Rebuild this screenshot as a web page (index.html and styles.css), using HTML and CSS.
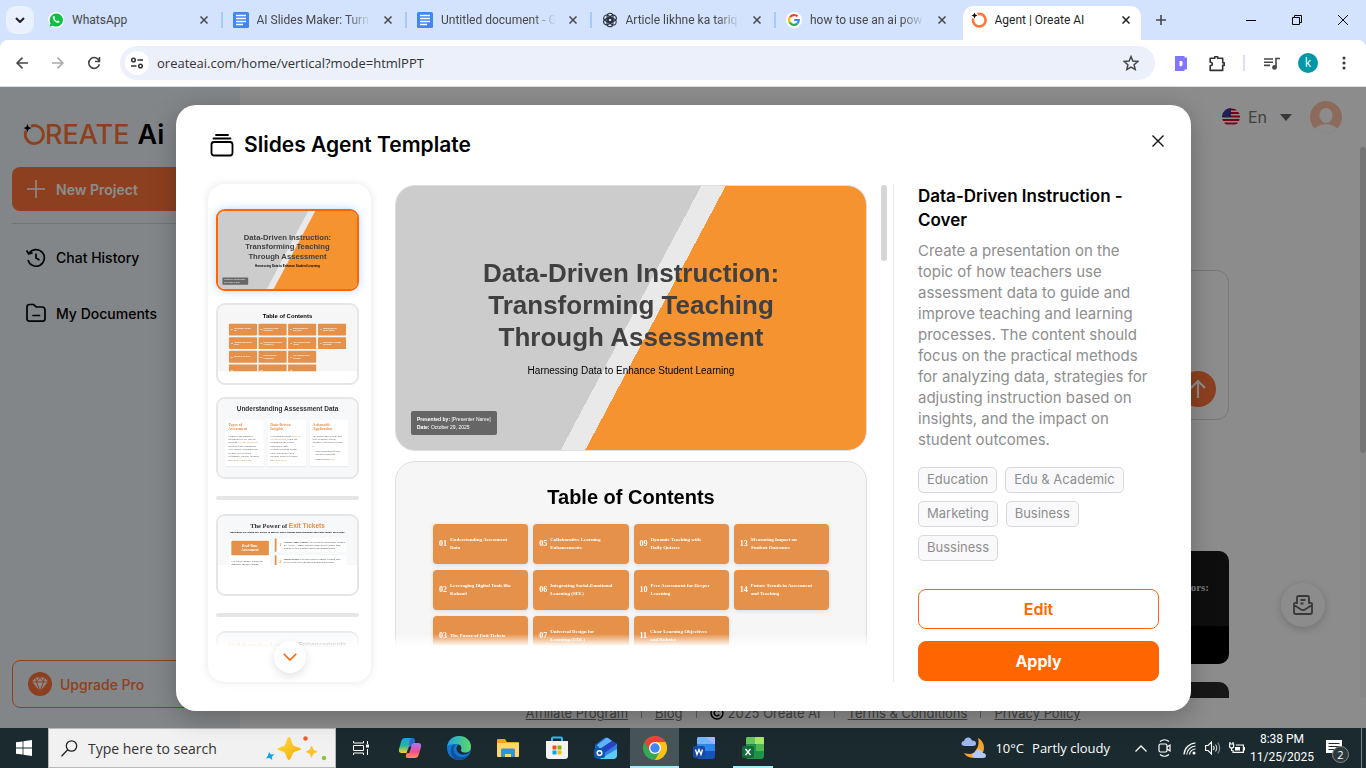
FILE: index.html
```html
<!DOCTYPE html>
<html lang="en">
<head>
<meta charset="utf-8">
<title>Agent | Oreate AI</title>
<link rel="stylesheet" href="styles.css">
</head>
<body>
<header class="browser">
  <div class="tabstrip">
    <button class="tab-search" aria-label="Search tabs"><svg width="10" height="6" viewBox="0 0 10 6"><path d="M1 1l4 4 4-4" fill="none" stroke="#1f1f1f" stroke-width="2"/></svg></button>
    <div class="tabs">
      <div class="tab"><svg class="fav" viewBox="0 0 16 16"><circle cx="8" cy="8" r="8" fill="#fff"/><path d="M1.6 14.6l.9-3.5A6.6 6.6 0 1 1 5 13.700z" fill="#0bc143"/><path d="M5.300 4.300c-1.500 1 .2 3.900 1.500 5 1.400 1.300 3.700 2.500 4.600 1 .6-1.100-.2-1.100-1.300-1.800-.8-.4-.8.9-1.500.5C7.600 8.500 7 7.800 6.500 7c-.3-.6.9-.8.4-1.600-.4-.9-.8-1.700-1.600-1.100z" fill="#fff"/></svg><span class="tab-title">WhatsApp</span><button class="tab-close" aria-label="Close tab"><svg viewBox="0 0 8 8"><path d="M.5.5l7 7M7.500.5l-7 7"/></svg></button></div>
      <div class="tab"><svg class="fav" viewBox="0 0 16 16"><rect width="16" height="16" rx="1.500" fill="#4285f4"/><path d="M3 3.500h10M3 6.500h10M3 9.500h10M3 12.500h7" stroke="#fff" stroke-width="1.500"/></svg><span class="tab-title tab-fade">AI Slides Maker: Turn</span><button class="tab-close" aria-label="Close tab"><svg viewBox="0 0 8 8"><path d="M.5.5l7 7M7.500.5l-7 7"/></svg></button></div>
      <div class="tab"><svg class="fav" viewBox="0 0 16 16"><rect width="16" height="16" rx="1.500" fill="#4285f4"/><path d="M3 3.500h10M3 6.500h10M3 9.500h10M3 12.500h7" stroke="#fff" stroke-width="1.500"/></svg><span class="tab-title tab-fade">Untitled document - G</span><button class="tab-close" aria-label="Close tab"><svg viewBox="0 0 8 8"><path d="M.5.5l7 7M7.500.5l-7 7"/></svg></button></div>
      <div class="tab"><svg class="fav" viewBox="0 0 16 16" fill="none" stroke="#27303c" stroke-width="1.100"><g id="knot"><path d="M8 1.200a3 3 0 0 1 3 2.800v4.500L8 10.200 5.200 8.600"/><path d="M8 1.200a3 3 0 0 0-2.900 2.300L5.100 8"/></g><use href="#knot" transform="rotate(60 8 8)"/><use href="#knot" transform="rotate(120 8 8)"/><use href="#knot" transform="rotate(180 8 8)"/><use href="#knot" transform="rotate(240 8 8)"/><use href="#knot" transform="rotate(300 8 8)"/></svg><span class="tab-title tab-fade">Article likhne ka tariq</span><button class="tab-close" aria-label="Close tab"><svg viewBox="0 0 8 8"><path d="M.5.5l7 7M7.500.5l-7 7"/></svg></button></div>
      <div class="tab tab-last"><svg class="fav" viewBox="0 0 16 16"><circle cx="8" cy="8" r="8" fill="#fff"/><g fill="none" stroke-width="2.200"><path d="M4 5.200a4.900 4.900 0 0 1 7.500-.8" stroke="#ea4335"/><path d="M3.700 10.400a4.900 4.900 0 0 1 .3-5.200" stroke="#fbbc04"/><path d="M11.300 11.600a4.900 4.900 0 0 1-7.600-1.200" stroke="#34a853"/><path d="M8.200 8h4.600c0 1.600-.6 2.800-1.500 3.600" stroke="#4285f4"/></g></svg><span class="tab-title tab-fade">how to use an ai pow</span><button class="tab-close" aria-label="Close tab"><svg viewBox="0 0 8 8"><path d="M.5.5l7 7M7.500.5l-7 7"/></svg></button></div>
      <div class="tab tab-active"><svg class="fav" viewBox="0 0 16 16"><circle cx="8.300" cy="8.200" r="6.300" fill="none" stroke="#ff7539" stroke-width="2.600"/><circle cx="3.500" cy="3.500" r="3.300" fill="#fff"/><path d="M3.500.5l.9 2.100 2.100.9-2.100.9-.9 2.100-.9-2.100-2.100-.9 2.100-.9z" fill="#111"/></svg><span class="tab-title">Agent | Oreate AI</span><button class="tab-close" aria-label="Close tab"><svg viewBox="0 0 8 8"><path d="M.5.5l7 7M7.500.5l-7 7"/></svg></button></div>
    </div>
    <button class="new-tab" aria-label="New tab"><svg width="10" height="10" viewBox="0 0 10 10"><path d="M5 0v10M0 5h10" stroke="#474747" stroke-width="1.600"/></svg></button>
    <div class="window-controls">
      <button aria-label="Minimize"><svg width="10" height="10" viewBox="0 0 10 10"><path d="M0 5.500h10" stroke="#000"/></svg></button>
      <button aria-label="Restore"><svg width="10" height="10" viewBox="0 0 10 10" fill="none" stroke="#000"><path d="M.5 2.500h7v7h-7zM2.500 2.500v-2h7v7h-2"/></svg></button>
      <button aria-label="Close window"><svg width="10" height="10" viewBox="0 0 10 10"><path d="M0 0l10 10M10 0L0 10" stroke="#000"/></svg></button>
    </div>
  </div>
  <div class="toolbar">
    <button class="tool" aria-label="Back"><svg width="12" height="12" viewBox="0 0 12 12" fill="none" stroke="#474747" stroke-width="1.600"><path d="M12 6H1M6.500.600L1.100 6l5.400 5.400"/></svg></button>
    <button class="tool" aria-label="Forward"><svg width="12" height="12" viewBox="0 0 12 12" fill="none" stroke="#ababab" stroke-width="1.600"><path d="M0 6h11M5.500.600L10.900 6l-5.400 5.400"/></svg></button>
    <button class="tool" aria-label="Reload"><svg width="14" height="14" viewBox="0 0 14 14" fill="none" stroke="#474747" stroke-width="1.600"><path d="M12.200 5A5.400 5.400 0 1 0 12.400 8.300M12.500 1v4.500H8"/></svg></button>
    <div class="omnibox">
      <button class="site-info" aria-label="View site information"><svg width="14" height="12" viewBox="0 0 14 12" fill="none" stroke="#333" stroke-width="1.500"><circle cx="3.500" cy="3" r="1.800"/><path d="M7.500 3H13M1 9h5.500"/><circle cx="10.500" cy="9" r="1.800"/></svg></button>
      <input class="url" type="text" aria-label="Address and search bar" value="oreateai.com/home/vertical?mode=htmlPPT">
      <button class="star" aria-label="Bookmark this tab"><svg width="16" height="16" viewBox="0 0 16 16"><path d="M8 1.600l1.900 4.500 4.900.4-3.700 3.200 1.100 4.800L8 12l-4.200 2.500 1.100-4.800L1.200 6.500l4.900-.4z" fill="none" stroke="#474747" stroke-width="1.500"/></svg></button>
    </div>
    <div class="tool-group">
      <button class="tool" aria-label="D extension"><svg width="12" height="15" viewBox="0 0 12 15"><path d="M0 0h9.500v1.500H12v12H9.500V15H0z" fill="#8076ff"/><path d="M4.500 5q3-.5 3 1v3q0 1.500-3 1z" fill="#fff"/></svg></button>
      <button class="tool" aria-label="Extensions"><svg width="16" height="17" viewBox="0 0 16 17"><path d="M1.200 3.200h4.600V1.700h2.900v1.500h5v4.600h1.500v2.600h-1.500v5H1.200v-4.600q2.200-.2 2.200-1.700T1.200 7.300z" fill="none" stroke="#333" stroke-width="1.600" stroke-linejoin="round"/></svg></button>
      <span class="tool-sep"></span>
      <button class="tool" aria-label="Media controls"><svg width="16" height="13" viewBox="0 0 16 13"><path d="M0 2h9M0 5.200h9M0 8.400h6M12 10V1.500h4" fill="none" stroke="#474747" stroke-width="1.600"/><circle cx="10.500" cy="10.400" r="2.400" fill="#474747"/></svg></button>
      <button class="tool" aria-label="Profile"><span class="profile">k</span></button>
      <button class="tool" aria-label="Menu"><svg width="4" height="14" viewBox="0 0 4 14" fill="#333"><circle cx="2" cy="2" r="1.500"/><circle cx="2" cy="7" r="1.500"/><circle cx="2" cy="12" r="1.500"/></svg></button>
    </div>
  </div>
</header>

<div class="page">
  <nav class="sidebar">
    <a class="logo" href="#" aria-label="Oreate AI home"><svg width="22" height="24" viewBox="0 0 22 24"><path d="M8 4.200A9 9 0 1 1 3.300 8.500" fill="none" stroke="#ff7539" stroke-width="2.800"/><path d="M4.500 2l1.200 2.900L8.600 6 5.700 7.200 4.500 10 3.300 7.200.400 6l2.900-1.100z"/></svg><span class="logo-main">REATE</span><span class="logo-ai">Ai</span></a>
    <button class="new-project"><svg width="18" height="18" viewBox="0 0 18 18"><path d="M9 0v18M0 9h18" stroke="#fff" stroke-width="1.600"/></svg>New Project</button>
    <a class="nav-item" href="#"><svg width="20" height="20" viewBox="0 0 20 20" fill="none" stroke="#000" stroke-width="1.700"><path d="M3 5.500A8.300 8.300 0 1 1 2 12M.6 2.500L2.700 6l3.900-1.200M10 5.500V10l3.500 2"/></svg>Chat History</a>
    <a class="nav-item" href="#"><svg width="20" height="20" viewBox="0 0 20 20" fill="none" stroke="#000" stroke-width="1.700"><path d="M1 16V4q0-2.500 2.500-2.500h4L10.300 4H16q3 0 3 3v9q0 2.200-2.500 2.200h-13Q1 18.200 1 16zM7 12.500h6.500" stroke-linecap="round"/></svg>My Documents</a>
    <button class="upgrade"><svg width="24" height="24" viewBox="0 0 24 24"><circle cx="12" cy="12" r="12" fill="#ff7539"/><path d="M7.500 5.500h9l3.500 4.300-8 9.200-8-9.200z" fill="#fff"/><path d="M4 10h16M8.500 10l3.500 9 3.500-9L12 5.500 8.500 10 7.500 5.500M15.500 10l1-4.500" fill="none" stroke="#ff7539"/></svg>Upgrade Pro</button>
  </nav>
  <main class="main">
    <div class="topbar">
      <svg width="18" height="18" viewBox="0 0 18 18"><defs><clipPath id="flag"><circle cx="9" cy="9" r="9"/></clipPath></defs><g clip-path="url(#flag)"><path fill="#fff" d="M0 0h18v18H0z"/><path d="M0 1.500h18M0 5h18M0 8.500h18M0 12h18M0 15.500h18" stroke="#d80027" stroke-width="1.800"/><path fill="#3a3a9c" d="M0 0h9v9H0z"/></g></svg>
      <select class="lang" aria-label="Language"><option>En</option></select>
      <svg class="caret" width="12" height="7" viewBox="0 0 12 7"><path d="M0 0h12L6 7z" fill="#666"/></svg>
      <svg width="32" height="32" viewBox="0 0 32 32"><defs><clipPath id="ava"><circle cx="16" cy="16" r="16"/></clipPath></defs><g clip-path="url(#ava)"><path fill="#ffc4a8" d="M0 0h32v32H0z"/><ellipse cx="16" cy="14.500" rx="6.500" ry="7.500" fill="#fff"/><ellipse cx="16" cy="32" rx="13" ry="9" fill="#fff"/></g></svg>
    </div>
    <div class="scroll-area">
      <div class="content">
        <div class="prompt"><textarea aria-label="Prompt"></textarea><button class="send" aria-label="Send"><svg width="16" height="20" viewBox="0 0 16 20"><path d="M8 19V2M1 9l7-7 7 7" fill="none" stroke="#fff" stroke-width="2.200"/></svg></button></div>
        <div class="cards">
          <div class="card"></div><div class="card"></div><div class="card"></div><div class="card card-text"><span>ors:</span></div>
          <div class="card"></div><div class="card"></div><div class="card"></div><div class="card"></div>
        </div>
      </div>
      <div class="scroll-track"><div class="scroll-thumb"></div></div>
    </div>
    <footer class="footer">
      <a href="#">Affiliate Program</a><i></i><a href="#">Blog</a><i></i><span class="copy"><svg width="14" height="14" viewBox="0 0 14 14" fill="none" stroke="#000" stroke-width="1.500"><circle cx="7" cy="7" r="6"/><path d="M9.300 5.500a2.800 2.800 0 1 0 0 3"/></svg>2025 Oreate AI</span><i></i><a href="#">Terms &amp; Conditions</a><i></i><a href="#">Privacy Policy</a>
    </footer>
    <button class="feedback" aria-label="Messages"><svg width="22" height="22" viewBox="0 0 22 22" fill="none" stroke="#666" stroke-width="1.800" stroke-linejoin="round"><path d="M5 10V3.500Q5 2 6.500 2h9Q17 2 17 3.500V10M5 8L2 9.500V18q0 2 2 2h14q2 0 2-2V9.500L17 8M2 11l7 4.500q2 1 4 0L20 11M8.500 6h5M8.500 9.500h3"/></svg></button>
  </main>

  <div class="overlay">
    <section class="modal" role="dialog" aria-labelledby="modal-title">
      <div class="modal-head">
        <svg width="24" height="24" viewBox="0 0 24 24" fill="none" stroke="#000" stroke-width="1.800" stroke-linecap="round"><rect x="1.500" y="9" width="21" height="13.500" rx="2.500"/><path d="M3.500 5.500h17M6 2h12"/></svg>
        <h1 id="modal-title">Slides Agent Template</h1>
        <button class="modal-close" aria-label="Close"><svg width="12" height="12" viewBox="0 0 12 12"><path d="M.5.5l11 11M11.500.5l-11 11" stroke="#111" stroke-width="1.400"/></svg></button>
      </div>
      <div class="modal-body">
        <div class="thumbs">
          <div class="thumb-list">
            <button class="thumb thumb-on" aria-label="Slide 1">
              <svg viewBox="0 0 470 264"><path fill="#ccc" d="M0 0h470v264H0z"/><path fill="#e9e9e9" d="M305 0h40L205 264h-40z"/><path fill="#f69331" d="M329 0h141v264H188z"/>
              <g class="sans bold" text-anchor="middle" font-size="26" fill="#404040"><text x="235" y="97">Data-Driven Instruction:</text><text x="235" y="129">Transforming Teaching</text><text x="235" y="161">Through Assessment</text></g>
              <text class="sans bold" x="235" y="188" text-anchor="middle" font-size="10">Harnessing Data to Enhance Student Learning</text>
              <rect x="15" y="225" width="87" height="24" rx="2" fill="#666"/><g class="sans" font-size="5" fill="#fff"><text x="21" y="235">Presented by: [Presenter Name]</text><text x="21" y="243">Date: October 29, 2025</text></g></svg>
            </button>
            <button class="thumb" aria-label="Slide 2">
              <svg viewBox="0 0 470 264"><path fill="#f6f6f6" d="M0 0h470v224H0z"/><text class="sans bold" x="235" y="43" text-anchor="middle" font-size="20">Table of Contents</text>
              <g fill="#e5914a"><rect x="37" y="63" width="95" height="40" rx="3"/><rect x="137" y="63" width="95" height="40" rx="3"/><rect x="237" y="63" width="95" height="40" rx="3"/><rect x="338" y="63" width="95" height="40" rx="3"/><rect x="37" y="109" width="95" height="40" rx="3"/><rect x="137" y="109" width="95" height="40" rx="3"/><rect x="237" y="109" width="95" height="40" rx="3"/><rect x="338" y="109" width="95" height="40" rx="3"/><rect x="37" y="155" width="95" height="40" rx="3"/><rect x="137" y="155" width="95" height="40" rx="3"/><rect x="237" y="155" width="95" height="40" rx="3"/><path d="M37 201h95v23H37zM137 201h95v23h-95zM237 201h95v23h-95z"/></g>
              <g class="serif bold" font-size="8" fill="#fff"><text x="43" y="86">01</text><text x="143" y="86">05</text><text x="243" y="86">09</text><text x="344" y="86">13</text><text x="43" y="132">02</text><text x="143" y="132">06</text><text x="243" y="132">10</text><text x="344" y="132">14</text><text x="43" y="178">03</text><text x="143" y="178">07</text><text x="243" y="178">11</text><text x="43" y="222">04</text><text x="143" y="222">08</text><text x="243" y="222">12</text></g>
              <g class="serif bold" font-size="5" fill="#fff"><text x="54" y="81">Understanding Assessment</text><text x="54" y="89">Data</text><text x="154" y="81">Collaborative Learning</text><text x="154" y="89">Enhancements</text><text x="254" y="81">Dynamic Teaching with</text><text x="254" y="89">Daily Quizzes</text><text x="355" y="81">Measuring Impact on</text><text x="355" y="89">Student Outcomes</text><text x="54" y="127">Leveraging Digital Tools like</text><text x="54" y="135">Kahoot!</text><text x="154" y="127">Integrating Social-Emotional</text><text x="154" y="135">Learning (SEL)</text><text x="254" y="127">Peer Assessment for Deeper</text><text x="254" y="135">Learning</text><text x="355" y="127">Future Trends in Assessment</text><text x="355" y="135">and Teaching</text><text x="54" y="177">The Power of Exit Tickets</text><text x="154" y="173">Universal Design for</text><text x="154" y="181">Learning (UDL)</text><text x="254" y="173">Clear Learning Objectives</text><text x="254" y="181">and Rubrics</text></g></svg>
            </button>
            <button class="thumb" aria-label="Slide 3">
              <svg viewBox="0 0 470 264"><path fill="#f7f8fa" d="M0 0h470v264H0z"/><text class="sans bold" x="235" y="40" text-anchor="middle" font-size="22" fill="#333">Understanding Assessment Data</text>
              <g fill="#e9eaec"><rect x="24" y="73" width="131" height="158" rx="4"/><rect x="167" y="73" width="131" height="158" rx="4"/><rect x="310" y="73" width="131" height="158" rx="4"/></g><g fill="#fff"><rect x="24" y="70" width="131" height="157" rx="4"/><rect x="167" y="70" width="131" height="157" rx="4"/><rect x="310" y="70" width="131" height="157" rx="4"/></g>
              <g class="serif bold" font-size="13" fill="#e5914a"><text x="35" y="91">Types of</text><text x="35" y="106">Assessment</text><text x="177" y="91">Data-Driven</text><text x="177" y="106">Insights</text><text x="320" y="91">Actionable</text><text x="320" y="106">Application</text></g>
              <g class="serif" font-size="8" fill="#555"><text x="35" y="128">Formative and summative</text><text x="35" y="139">assessments are key tools for</text><text x="35" y="150">gathering <tspan fill="#e5914a">real-time student data</tspan></text><text x="35" y="162">and identifying learning gaps.</text><text x="35" y="173">They provide a continuous and</text><text x="35" y="185">periodic view of student</text><text x="35" y="196">performance, not only for marks</text><text x="35" y="208">but <tspan fill="#e5914a">informed instruction.</tspan></text>
              <text x="177" y="128">Leveraging data turns <tspan fill="#e5914a">scores to</tspan></text><text x="177" y="139"><tspan fill="#e5914a">teaching insights</tspan>, trends and</text><text x="177" y="150">learning patterns, such as</text><text x="177" y="162">class gaps become.</text><text x="177" y="173">Teachers can design lessons</text><text x="177" y="185">where students need help</text><text x="177" y="196">and make adaptive decisions</text><text x="177" y="208">for <tspan fill="#e5914a">student skills.</tspan></text>
              <text x="320" y="128">The primary goal is to use data</text><text x="320" y="139">daily to improve student</text><text x="320" y="150">outcomes. This involves setting</text><text x="320" y="162">it:</text><text x="328" y="178" font-size="7">Group learning gaps efficiently.</text><text x="328" y="188" font-size="7">Plan targeted instruction.</text><text x="328" y="206" font-size="7">Support students <tspan fill="#e5914a">quickly.</tspan></text></g></svg>
            </button>
            <hr>
            <button class="thumb" aria-label="Slide 4">
              <svg viewBox="0 0 470 264"><path fill="#f7f8fa" d="M0 0h470v166H0z"/><text x="235" y="40" text-anchor="middle" font-size="22" fill="#333" class="serif bold">The Power of <tspan class="sans" fill="#e5914a">Exit Tickets</tspan></text><text class="serif bold" x="235" y="57" text-anchor="middle" font-size="9">Implement 60-second exit tickets to quickly assess student understanding and tailor follow-up lessons.</text>
              <path fill="#fff" d="M37 80h140v86H37zM195 76h240v45H195zM195 133h240v33H195z"/><rect x="45" y="84" width="127" height="49" rx="3" fill="#e5914a"/><path fill="#e5914a" d="M192 76h6v45h-6zM192 133h6v33h-6z"/>
              <g class="serif bold" font-size="12" fill="#fff" text-anchor="middle"><text x="108" y="104">Real-Time</text><text x="108" y="119">Assessment</text></g><g class="serif bold" font-size="14" fill="#e5914a"><text x="207" y="103">1</text><text x="207" y="159">2</text></g>
              <g class="serif" font-size="8" fill="#444"><text x="45" y="155">Exit tickets empower teachers for</text><text x="45" y="165">immediate and daily insights</text><text x="222" y="91"><tspan class="bold">Capture Finger Console:</tspan> Use checks for student goals in simple</text><text x="222" y="102">or 1–5 style. A simple sentence prompt gives feedback from</text><text x="222" y="113">students. Repeat to gauge progress and thoughtfulness.</text><text x="222" y="148"><tspan class="bold">Submit Results:</tspan> Use rubric tickets to choose learning, such</text><text x="222" y="159">as FOCUS or reflection and the measures as available</text></g></svg>
            </button>
            <hr>
            <button class="thumb" aria-label="Slide 5">
              <svg viewBox="0 0 470 264"><path fill="#f7f8fa" d="M0 0h470v264H0z"/><text x="235" y="46" text-anchor="middle" font-size="23" fill="#333" class="serif bold"><tspan fill="#e5914a">Collaborative Learning</tspan> <tspan class="sans">Enhancements</tspan></text></svg>
            </button>
          </div>
          <button class="more" aria-label="Scroll down"><svg width="14" height="8" viewBox="0 0 14 8"><path d="M.7.7L7 7 13.300.7" fill="none" stroke="#f60" stroke-width="1.600"/></svg></button>
        </div>

        <div class="viewer">
          <div class="slides">
            <article class="slide cover">
              <h2>Data-Driven Instruction:<br>Transforming Teaching<br>Through Assessment</h2>
              <p>Harnessing Data to Enhance Student Learning</p>
              <div class="presenter"><b>Presented by:</b> [Presenter Name]<br><b>Date:</b> October 29, 2025</div>
            </article>
            <article class="slide toc">
              <h2>Table of Contents</h2>
              <ol>
                <li><b>01</b><span>Understanding Assessment<br>Data</span></li><li><b>02</b><span>Leveraging Digital Tools like<br>Kahoot!</span></li><li><b>03</b><span>The Power of Exit Tickets</span></li>
                <li><b>05</b><span>Collaborative Learning<br>Enhancements</span></li><li><b>06</b><span>Integrating Social-Emotional<br>Learning (SEL)</span></li><li><b>07</b><span>Universal Design for<br>Learning (UDL)</span></li>
                <li><b>09</b><span>Dynamic Teaching with<br>Daily Quizzes</span></li><li><b>10</b><span>Peer Assessment for Deeper<br>Learning</span></li><li><b>11</b><span>Clear Learning Objectives<br>and Rubrics</span></li>
                <li><b>13</b><span>Measuring Impact on<br>Student Outcomes</span></li><li><b>14</b><span>Future Trends in Assessment<br>and Teaching</span></li>
              </ol>
            </article>
          </div>
          <div class="viewer-bar"></div>
        </div>

        <aside class="details">
          <h2>Data-Driven Instruction -<br>Cover</h2>
          <p>Create a presentation on the<br>topic of how teachers use<br>assessment data to guide and<br>improve teaching and learning<br>processes. The content should<br>focus on the practical methods<br>for analyzing data, strategies for<br>adjusting instruction based on<br>insights, and the impact on<br>student outcomes.</p>
          <ul class="tags"><li>Education</li><li>Edu &amp; Academic</li><li>Marketing</li><li>Business</li><li>Bussiness</li></ul>
          <div class="actions"><button class="edit">Edit</button><button class="apply">Apply</button></div>
        </aside>
      </div>
    </section>
  </div>
</div>

<div class="taskbar">
  <button class="start" aria-label="Start"><svg width="16" height="16" viewBox="0 0 16 16" fill="#fff"><path d="M0 2.300L6.600 1.400v6.200H0zM7.400 1.200L16 0v7.600H7.400zM0 8.400h6.600v6.200L0 13.700zM7.400 8.400H16V16l-8.600-1.200z"/></svg></button>
  <div class="search">
    <svg width="17" height="17" viewBox="0 0 17 17" fill="none" stroke="#222" stroke-width="1.300"><circle cx="10.500" cy="6" r="5.200"/><path d="M6.700 9.800L.5 16.300"/></svg>
    <input type="text" aria-label="Search" placeholder="Type here to search">
    <svg width="62" height="26" viewBox="0 0 62 26"><defs><linearGradient id="gold" x2="1" y2="1"><stop offset="0" stop-color="#ffdf45"/><stop offset="1" stop-color="#f5a800"/></linearGradient></defs><path d="M24 2c2 0 3 7 4.500 8.500S36 12.500 36 14s-6 2-7.500 3.500S26 25 24 25s-3-6-4.500-7.500S12.500 15.500 12.500 14s5.500-2 7-3.500S22 2 24 2z" fill="url(#gold)"/><path d="M46.500 11c1 0 1.500 3 2 3.700s3.700 1.100 3.700 2-3 1.300-3.700 2-1.200 3.700-2 3.700-1.300-3-2-3.700-3.600-1.100-3.600-2 2.900-1.300 3.600-2 1-3.700 2-3.700z" fill="#fbc02d"/><path d="M4 17l2 2.500 3.400-.3L7 21.800 7.200 25l-2.600-2-3.600.5 2-3z" fill="#13a4ee"/><circle cx="40.500" cy="3.500" r="2.200" fill="#f25c2a"/><circle cx="59" cy="23" r="2.200" fill="#8ac53c"/></svg>
  </div>
  <div class="apps">
    <button aria-label="Task view"><svg width="16" height="16" viewBox="0 0 16 16" fill="none" stroke="#fff"><path d="M.5 1v2h10V1M.5 5.500h10v5H.5zM.5 15v-2h10v2M14.500 1v3M14.500 9v6"/><path d="M13 4.500h3v3h-3z" fill="#fff" stroke="none"/></svg></button>
    <button aria-label="Copilot"><svg width="24" height="24" viewBox="0 0 24 24"><defs><linearGradient id="cp1" x2="0" y2="1"><stop offset="0" stop-color="#14a3ee"/><stop offset=".5" stop-color="#23b5a0"/><stop offset="1" stop-color="#ffd130"/></linearGradient><linearGradient id="cp2" x2="0" y2="1"><stop offset="0" stop-color="#a978f0"/><stop offset=".55" stop-color="#ee4e96"/><stop offset="1" stop-color="#ff944a"/></linearGradient></defs><path d="M7 2h7q3 0 2.500 3L13 14q-1 3-4 3H4q-4 0-3-4l2-7q1-4 4-4z" fill="url(#cp1)"/><path d="M17 22h-7q-3 0-2-3l3-9q1-3 4-3h5q4 0 3 4l-2 7q-1 4-4 4z" fill="url(#cp2)"/><path d="M13 2q4 0 4 5-3 0-4 3l-1 3q-2-6 1-11z" fill="#2868d8"/><path d="M11 10.500h2.500l-2.300 6.500H8.500z" fill="#1a2a2e"/></svg></button>
    <button aria-label="Edge"><svg width="24" height="24" viewBox="0 0 24 24"><defs><linearGradient id="ed" x2="1"><stop offset="0" stop-color="#1fa3e8"/><stop offset="1" stop-color="#5fda62"/></linearGradient></defs><circle cx="12" cy="12" r="12" fill="#1177cc"/><path d="M.3 10C1.500 4 6 0 12 0c7 0 12 5 12 10.500 0 4-3 6-6 6s-4.500-1-4-2.500c1-2 0-5.500-4.500-6C5 7.500 1.500 9 .3 10z" fill="url(#ed)"/><path d="M9 8c-4 3-3 11 4 13 4 1 7-1 9-3-3 5-8 7-13 5.500C2 20 2 9.500 9 8z" fill="#104e9e"/><path d="M14 14c1-3-.5-5-2.500-5.500C8 11 9 18 15.500 18.500c3.500.2 6-1 7.500-3-5 2.500-9.500 1-9-1.500z" fill="#1a2a2e"/></svg></button>
    <button aria-label="File Explorer"><svg width="22" height="20" viewBox="0 0 22 20"><path d="M0 2q0-1 1-1h7l2 3h11q1 0 1 1v13H0z" fill="#e8a81e"/><path d="M0 5h22v13q0 1-1 1H1q-1 0-1-1z" fill="#ffd766"/><path d="M4 19v-7q0-1.500 1.500-1.500h11Q18 10.500 18 12v7h-4v-3H8v3z" fill="#3791d8"/></svg></button>
    <button aria-label="Store"><svg width="24" height="24" viewBox="0 0 24 24"><path d="M7 6V2.500Q7 1.500 8 1.500h8q1 0 1 1V6" fill="none" stroke="#33b6f0" stroke-width="2"/><path d="M1 5h22v15q0 3-3 3H4q-3 0-3-3z" fill="#f3f3f3"/><path d="M7.500 9.500h4v4h-4z" fill="#f25022"/><path d="M12.500 9.500h4v4h-4z" fill="#7fba00"/><path d="M7.500 14.500h4v4h-4z" fill="#00a4ef"/><path d="M12.500 14.500h4v4h-4z" fill="#ffb900"/></svg></button>
    <button aria-label="Outlook"><svg width="24" height="24" viewBox="0 0 24 24"><path d="M1 9l9-7q2-1 4 0l9 6v11q0 4-4 4H5q-4 0-4-4z" fill="#1a5fd0"/><path d="M3 9l9-7q1-.5 2 0l4 3-12 8z" fill="#5db5f7"/><path d="M18 5l5 3-11 9-6-4z" fill="#2a3fc4"/><path d="M23 8v11q0 4-4 4H6z" fill="#58cdf9"/><path d="M23 8v5L11 20l-2-2z" fill="#2f7fe8"/><rect y="12" width="11" height="10" rx="2" fill="#0a58ad"/><circle cx="5.500" cy="17" r="2.300" fill="none" stroke="#fff" stroke-width="1.500"/></svg></button>
    <button class="app-on app-current" aria-label="Chrome"><svg width="24" height="24" viewBox="0 0 24 24"><circle cx="12" cy="12" r="12" fill="#34a853"/><path d="M1.600 6A12 12 0 0 1 22.400 6H12L7 15z" fill="#ea4335"/><path d="M22.400 6A12 12 0 0 1 12 24l5.200-9L12 6z" fill="#fbc116"/><circle cx="12" cy="12" r="6" fill="#fff"/><circle cx="12" cy="12" r="4.700" fill="#4285f4"/></svg></button>
    <button aria-label="Word"><svg width="22" height="24" viewBox="0 0 22 24"><path d="M5 1h16q1 0 1 1v6H4V3q0-2 1-2z" fill="#74b4fb"/><path d="M13 1h8q1 0 1 2v6z" fill="#a7b5ff"/><path d="M4 8h18v7H4z" fill="#2e85e8"/><path d="M4 15h18v5q0 3-3 3H6q-2 0-2-2z" fill="#1455bd"/><rect y="10" width="12" height="12" rx="2" fill="#164ca6"/><path d="M2.500 13.500l1.500 5 2-5 2 5 1.500-5" fill="none" stroke="#fff" stroke-width="1.300"/></svg></button>
    <button class="app-on" aria-label="Excel"><svg width="22" height="24" viewBox="0 0 22 24"><path d="M5 1h16q1 0 1 1v6H4V3q0-2 1-2z" fill="#67c45a"/><path d="M13 1h8q1 0 1 2v6h-9z" fill="#a6e46b"/><path d="M4 8h18v12q0 3-3 3H6q-2 0-2-2z" fill="#1f9448"/><path d="M14 8h8v7h-8z" fill="#4cb84f"/><rect y="10" width="12" height="12" rx="2" fill="#136b3b"/><path d="M3.500 13l5 6M8.500 13l-5 6" stroke="#fff" stroke-width="1.500"/></svg></button>
  </div>
  <div class="tray">
    <button class="weather"><svg width="26" height="24" viewBox="0 0 26 24"><path d="M17 2c8 4 8 16 0 19-6 2-12 0-14-4 6 2 10 1 12-3 3-4 3-8 2-12z" fill="#f8a32c"/><path d="M4 10q-4 0-3.500-3Q1 5 3 5q1-4 5-3.500 2 .5 3 3 4 0 4 3 0 2.500-3 2.500z" fill="#9db8f0"/><path d="M14 22q-3 0-3-3 0-2 2.500-2 1-4 4.500-3.500 3 .5 3.500 3.500 3.500 0 3.500 2.500T22 22z" fill="#b3c9f7"/></svg><span>10°C</span><span>Partly cloudy</span></button>
    <button aria-label="Show hidden icons"><svg width="12" height="7" viewBox="0 0 12 7"><path d="M.5 6.500L6 1l5.500 5.500" fill="none" stroke="#fff" stroke-width="1.300"/></svg></button>
    <button aria-label="Meet Now"><svg width="14" height="18" viewBox="0 0 14 18" fill="none" stroke="#fff" stroke-width="1.200"><path d="M2 2.500q4.500-3.500 9 0M2 15.500q4.500 3.500 9 0"/><rect x="1" y="5" width="8" height="8" rx="1.500"/><path d="M9 8l3-2v6l-3-2"/></svg></button>
    <button aria-label="Network"><svg width="13" height="13" viewBox="0 0 13 13" fill="none" stroke="#fff" stroke-width="1.200"><path d="M1 12.500A12 12 0 0 1 12.500 1M3.800 12.500A9 9 0 0 1 12.500 4M6.500 12.500a6 6 0 0 1 6-5.500" /><circle cx="11" cy="11" r="1.500" fill="#fff" stroke="none"/></svg></button>
    <button aria-label="Volume"><svg width="16" height="14" viewBox="0 0 16 14" fill="none" stroke="#fff" stroke-width="1.100"><path d="M.6 4.500h2.500L6.500 1v12L3.100 9.500H.6zM8.500 5q1.300 2 0 4"/><path d="M10.500 3.500q2.500 3.500 0 7" opacity=".8"/><path d="M12.700 1.500q4 5.500 0 11" opacity=".5"/></svg></button>
    <button aria-label="Battery"><svg width="16" height="13" viewBox="0 0 16 13" fill="none" stroke="#fff" stroke-width="1.200"><path d="M7 3h7.400v7.400H4V8"/><path d="M6 5h5v3.500H6z" fill="#fff" stroke="none"/><path d="M15.500 5v3.500M1 0v2M4 0v2M.6 2h4v3q-2 2-4 0zM2.600 6v3"/></svg></button>
    <button class="clock"><span>8:38 PM</span><span>11/25/2025</span></button>
    <button class="notify" aria-label="Notifications"><svg width="16" height="16" viewBox="0 0 16 16"><path d="M0 0h16v13h-6l-3 3v-3H0z" fill="#fff"/><path d="M2.500 3.500h11M2.500 6.500h11M2.500 9.500h7" stroke="#1a2a2e"/></svg><span class="badge">2</span></button>
    <span class="peek"></span>
  </div>
</div>
</body>
</html>
```
FILE: styles.css
```css
* { box-sizing: border-box; }
body { margin: 0; height: 100vh; display: flex; flex-direction: column; overflow: hidden; font-family: "Open Sans", "Noto Sans", sans-serif; font-size: 12px; color: #1f1f1f; }
button, input, textarea, select { font: inherit; color: inherit; border: 0; background: none; padding: 0; margin: 0; outline: 0; }
button { display: flex; align-items: center; justify-content: center; }
svg { flex: none; display: block; }
h1, h2, p, ol, ul { margin: 0; padding: 0; list-style: none; }
.sans { font-family: "Liberation Sans", Arial, sans-serif; }
.serif { font-family: "Liberation Serif", "Times New Roman", serif; }
.bold { font-weight: 700; }

/* browser frame */
.browser { flex: none; background: #d3e2fd; }
.tabstrip { display: flex; align-items: center; height: 40px; }
.tab-search { width: 28px; height: 28px; margin: 0 4px 0 6px; border-radius: 9px; background: #e9f0fe; }
.tabs { flex: 1; display: flex; height: 40px; min-width: 0; }
.tab { flex: 1 1 0; min-width: 0; display: flex; align-items: center; gap: 8px; padding: 0 14px 0 10px; position: relative; color: #474747; font-family: Roboto, sans-serif; }
.tab::after { content: ""; position: absolute; right: 0; top: 12px; width: 2px; height: 16px; background: #a8c7fa; }
.tab-last::after, .tab-active::after { display: none; }
.fav { width: 16px; height: 16px; }
.tab-title { flex: 1; overflow: hidden; white-space: nowrap; }
.tab-fade { mask-image: linear-gradient(90deg, #000 calc(100% - 28px), transparent calc(100% - 4px)); }
.tab-close { width: 10px; height: 16px; }
.tab-close svg { width: 8px; height: 8px; stroke: #474747; stroke-width: 1.5; }
.tab-active { color: #1f1f1f; z-index: 0; }
.tab-active::before { content: ""; position: absolute; z-index: -1; inset: 6px 4px 0 2px; background: #fff; border-radius: 10px 10px 0 0; }
.tab-active .tab-close svg { stroke: #1f1f1f; }
.new-tab { width: 28px; height: 28px; margin: 0 53px 0 2px; }
.window-controls { display: flex; }
.window-controls button { width: 46px; height: 40px; }
.toolbar { display: flex; align-items: center; height: 47px; padding: 0 4px; background: #fff; border-bottom: 1px solid #dadce0; border-radius: 8px 8px 0 0; }
.tool { width: 36px; height: 36px; }
.omnibox { flex: 1; display: flex; align-items: center; height: 34px; margin: 0 8px; padding: 0 16px 0 5px; border-radius: 17px; background: #ecf0fa; }
.site-info { width: 24px; height: 24px; border-radius: 12px; background: #fff; margin-right: 8px; }
.url { flex: 1; font-size: 13px; color: #333; }
.tool-group { display: flex; align-items: center; }
.tool-sep { width: 2px; height: 16px; margin: 0 9px 0 8px; background: #d3e2fd; }
.profile { width: 20px; height: 20px; border-radius: 10px; background: #0097a7; color: #fff; font-size: 12px; line-height: 19px; }

/* page behind the dialog */
.page { flex: 1; min-height: 0; display: flex; position: relative; background: #fff; font-family: Inter, sans-serif; }
.sidebar { width: 240px; flex: none; display: flex; flex-direction: column; padding: 32px 12px 20px; background: #eff4f8; font-size: 14px; font-weight: 500; }
.logo { display: flex; align-items: center; height: 30px; padding-left: 11px; font-size: 27px; font-weight: 500; text-decoration: none; color: #000; }
.logo-main { color: #ff7539; margin-right: 8px; }
.logo-ai { font-weight: 600; }
.new-project { justify-content: flex-start; gap: 11px; height: 44px; margin: 18px 0 12px; padding-left: 15px; border-radius: 8px; background: #ff7539; color: #fff; font-weight: 600; }
.nav-item { display: flex; align-items: center; gap: 10px; height: 56px; padding-left: 14px; color: #000; text-decoration: none; }
.new-project + .nav-item { border-top: 1px solid #d0d4d8; padding-top: 6px; height: 62px; }
.upgrade { justify-content: flex-start; gap: 8px; height: 48px; margin-top: auto; padding-left: 15px; border: 1px solid #ff7539; border-radius: 8px; color: #ff7539; }
.main { flex: 1; min-width: 0; display: flex; flex-direction: column; position: relative; }
.topbar { display: flex; align-items: center; justify-content: flex-end; height: 60px; padding-right: 24px; color: #777; }
.lang { appearance: none; font-size: 16px; margin: 0 12px 0 8px; }
.caret { margin-right: 18px; }
.scroll-area { flex: 1; min-height: 0; display: flex; overflow: hidden; }
.content { flex: 1; padding: 123px 131px 0; }
.prompt { display: flex; align-items: flex-end; height: 150px; padding: 12px; border: 1px solid #d8d8d8; border-radius: 12px; }
.prompt textarea { flex: 1; resize: none; }
.send { width: 36px; height: 36px; border-radius: 18px; background: #ff7539; }
.cards { display: grid; grid-template-columns: repeat(4, 1fr); gap: 18px; margin-top: 131px; }
.card { height: 113px; border-radius: 10px; background: #2a2a2a; }
.card-text { display: flex; justify-content: flex-end; padding: 30px 20px; background: linear-gradient(#1a1a1a 66%, #000 66%); color: #ddd; font: 700 11px "Liberation Serif", serif; }
.scroll-track { width: 6px; background: #f8f8f8; }
.scroll-thumb { height: 306px; border-radius: 3px; background: #d5d5d5; }
.footer { flex: none; display: flex; align-items: center; justify-content: center; gap: 13px; height: 30px; font-size: 13px; color: #777; }
.footer a { color: inherit; }
.footer i { width: 1px; height: 10px; background: #aaa; }
.copy { display: flex; align-items: center; gap: 4px; }
.feedback { position: absolute; right: 41px; bottom: 101px; width: 44px; height: 44px; border-radius: 22px; background: #fff; box-shadow: 0 2px 8px rgba(0, 0, 0, .2); }

/* dialog */
.overlay { position: absolute; inset: 0; display: flex; padding: 18px 175px 17px 176px; background: rgba(0, 0, 0, .45); }
.modal { flex: 1; min-width: 0; display: flex; flex-direction: column; padding: 0 32px 29px; border-radius: 20px; background: #fff; box-shadow: 0 6px 24px rgba(0, 0, 0, .25); color: #000; }
.modal-head { flex: none; display: flex; align-items: center; height: 79px; gap: 10px; padding-left: 2px; }
.modal-head h1 { flex: 1; font-size: 21px; font-weight: 600; }
.modal-close { width: 20px; height: 20px; margin: 0 -9px 8px 0; }
.modal-body { flex: 1; min-height: 0; display: grid; grid-template-columns: 163px minmax(0, 1fr) 266px; grid-template-rows: minmax(0, 1fr); }
.thumbs { display: flex; flex-direction: column; padding: 25px 12px 37px 8px; border-radius: 16px; box-shadow: 0 0 8px rgba(0, 0, 0, .1); position: relative; }
.thumb-list { flex: 1; min-height: 0; margin: -12px; padding: 12px; overflow: hidden; display: flex; flex-direction: column; mask-image: linear-gradient(#000 calc(100% - 28px), transparent calc(100% - 10px)); }
.thumb { flex: none; display: block; width: 100%; margin-bottom: 12px; border: 2px solid #e6e6e6; border-radius: 9px; overflow: hidden; background: #fff; }
.thumb svg { width: 100%; }
.thumb-on { border-color: #f60; box-shadow: 0 0 8px rgba(64, 158, 255, .4); }
.thumb-list hr { flex: none; width: 100%; height: 4px; margin: 5px 0 14px; border: 0; border-radius: 2px; background: #e6e6e6; }
.more { position: absolute; left: 50%; bottom: 9px; width: 32px; height: 32px; margin-left: -16px; border-radius: 16px; background: #fff; box-shadow: 0 3px 10px rgba(0, 0, 0, .12); }
.viewer { display: flex; gap: 14px; padding: 1px 6px 36px 24px; }
.slides { flex: 1; min-width: 0; overflow: hidden; mask-image: linear-gradient(#000 calc(100% - 12px), transparent); font-family: "Liberation Sans", Arial, sans-serif; }
.slide { aspect-ratio: 472 / 266; margin-bottom: 10px; border: 1px solid #dedede; border-radius: 20px; overflow: hidden; }
.viewer-bar { flex: none; width: 6px; height: 76px; border-radius: 3px; background: #d6d6d6; }
.cover { display: flex; flex-direction: column; align-items: center; padding: 71px 15px 15px; background: linear-gradient(118deg, #ccc 50%, #e9e9e9 50% 54%, #f69331 54%); }
.cover h2 { font-size: 26px; line-height: 32px; text-align: center; color: #404040; }
.cover p { margin-top: 10px; font-size: 10px; line-height: 16px; }
.presenter { align-self: flex-start; margin-top: auto; padding: 4px 6px; border-radius: 2px; background: #666; color: #fff; font-size: 5px; line-height: 8px; }
.toc { padding: 23px 37px; background: #f6f6f6; }
.toc h2 { font-size: 20px; line-height: 24px; text-align: center; }
.toc ol { display: grid; grid-template: repeat(3, 40px) / repeat(4, 1fr); grid-auto-flow: column; gap: 6px 5px; margin-top: 15px; font-family: "Liberation Serif", serif; }
.toc li { display: flex; align-items: center; gap: 3px; padding: 0 5px 0 6px; border-radius: 4px; background: #e5914a; color: #fff; font-size: 5px; font-weight: 700; line-height: 8px; box-shadow: 0 1px 4px rgba(0, 0, 0, .12); }
.toc li b { font-size: 8px; }
.details { display: flex; flex-direction: column; min-height: 0; padding-left: 24px; border-left: 1px solid #ececec; font-family: Inter, sans-serif; }
.details h2 { font-size: 17px; line-height: 24px; font-weight: 600; }
.details p { margin: 8px 0 17px; font-size: 15px; line-height: 21px; color: #8e8e8e; white-space: nowrap; }
.tags { display: flex; flex-wrap: wrap; gap: 8px; }
.tags li { height: 26px; padding: 0 8px; border: 1px solid #d9d9d9; border-radius: 5px; background: #f9f9fb; color: #8e8e8e; font-size: 13px; line-height: 23px; }
.actions { display: flex; flex-direction: column; gap: 12px; margin-top: auto; padding-bottom: 1px; }
.actions button { height: 40px; border: 1px solid #f60; border-radius: 8px; font-size: 16px; font-weight: 600; color: #f60; }
.actions .apply { background: #f60; color: #fff; font-weight: 700; }

/* taskbar */
.taskbar { flex: none; display: flex; height: 40px; background: #1a2a2e; color: #fff; }
.start { width: 48px; }
.search { display: flex; align-items: center; width: 288px; padding: 0 8px 0 12px; border: 1px solid #b8b8b8; background: #f1f1f1; }
.search input { flex: 1; min-width: 0; margin-left: 10px; font-size: 14px; }
.search input::placeholder { color: #333; opacity: 1; }
.apps { display: flex; }
.apps button { width: 49px; position: relative; }
.apps .app-current { background: #465458; }
.app-on::after { content: ""; position: absolute; left: 5px; right: 4px; bottom: 0; height: 2px; background: #a5ecfb; }
.app-current::after { left: 0; right: 0; }
.tray { display: flex; margin-left: auto; }
.tray button { width: 24px; }
.tray .weather { width: auto; gap: 8px; margin-right: 19px; font-size: 13px; }
.tray .clock { flex-direction: column; width: 66px; line-height: 18px; font-family: Roboto, sans-serif; }
.tray .notify { width: 38px; position: relative; }
.badge { position: absolute; left: 17px; bottom: 5px; width: 17px; height: 17px; border: 1px solid #888; border-radius: 9px; background: #2c3a3d; font-size: 11px; line-height: 15px; text-align: center; }
.peek { width: 5px; margin-left: 8px; border-left: 1px solid #76868a; }
```
